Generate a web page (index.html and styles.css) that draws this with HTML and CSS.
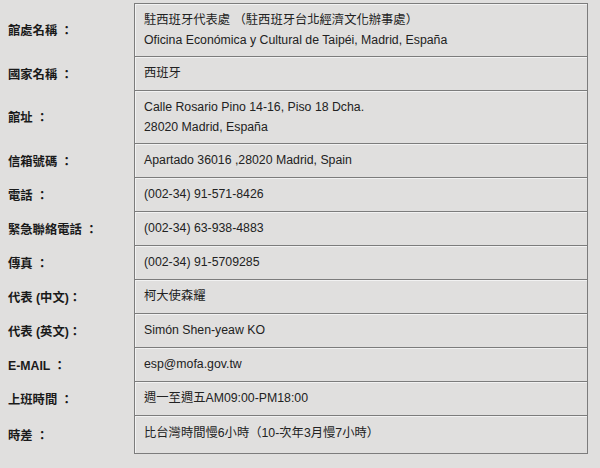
FILE: index.html
```html
<!DOCTYPE html>
<html lang="zh-Hant">
<head>
<meta charset="utf-8">
<title>駐西班牙代表處</title>
<link rel="stylesheet" href="styles.css">
</head>
<body>
<table class="info">
  <tbody>
    <tr class="two"><th>館處名稱 ：</th><td>駐西班牙代表處 （駐西班牙台北經濟文化辦事處）<br>Oficina Económica y Cultural de Taipéi, Madrid, España</td></tr>
    <tr><th>國家名稱 ：</th><td>西班牙</td></tr>
    <tr class="two"><th>館址 ：</th><td>Calle Rosario Pino 14-16, Piso 18 Dcha.<br>28020 Madrid, España</td></tr>
    <tr><th>信箱號碼 ：</th><td>Apartado 36016 ,28020 Madrid, Spain</td></tr>
    <tr><th>電話 ：</th><td>(002-34) 91-571-8426</td></tr>
    <tr><th>緊急聯絡電話 ：</th><td>(002-34) 63-938-4883</td></tr>
    <tr><th>傳真 ：</th><td>(002-34) 91-5709285</td></tr>
    <tr><th>代表 (中文)：</th><td>柯大使森耀</td></tr>
    <tr><th>代表 (英文)：</th><td>Simón Shen-yeaw KO</td></tr>
    <tr><th>E-MAIL ：</th><td>esp@mofa.gov.tw</td></tr>
    <tr><th>上班時間 ：</th><td>週一至週五AM09:00-PM18:00</td></tr>
    <tr class="last"><th>時差 ：</th><td>比台灣時間慢6小時（10-次年3月慢7小時）</td></tr>
  </tbody>
</table>
</body>
</html>
```

FILE: styles.css
```css
html, body {
  margin: 0;
  padding: 0;
  background: #e0dfde;
}
body {
  padding: 3px 0 0 8px;
  font-family: "Liberation Sans", "Noto Sans CJK TC", sans-serif;
  font-size: 12.3px;
  color: #222;
}
.info {
  border-collapse: collapse;
  width: 580px;
}
.info th {
  width: 126px;
  padding: 0;
  text-align: left;
  font-weight: bold;
  color: #1a1a1a;
  vertical-align: middle;
  white-space: nowrap;
}
.info td {
  padding: 6px 9px 7px;
  line-height: 20px;
  border: 1px solid #7c7c7c;
  box-shadow: inset 1px 1px 0 #f2f2f2;
  color: #222;
}
.info .two td {
  padding-bottom: 6px;
}
.info .last td {
  padding-top: 7px;
  padding-bottom: 10px;
}
```
